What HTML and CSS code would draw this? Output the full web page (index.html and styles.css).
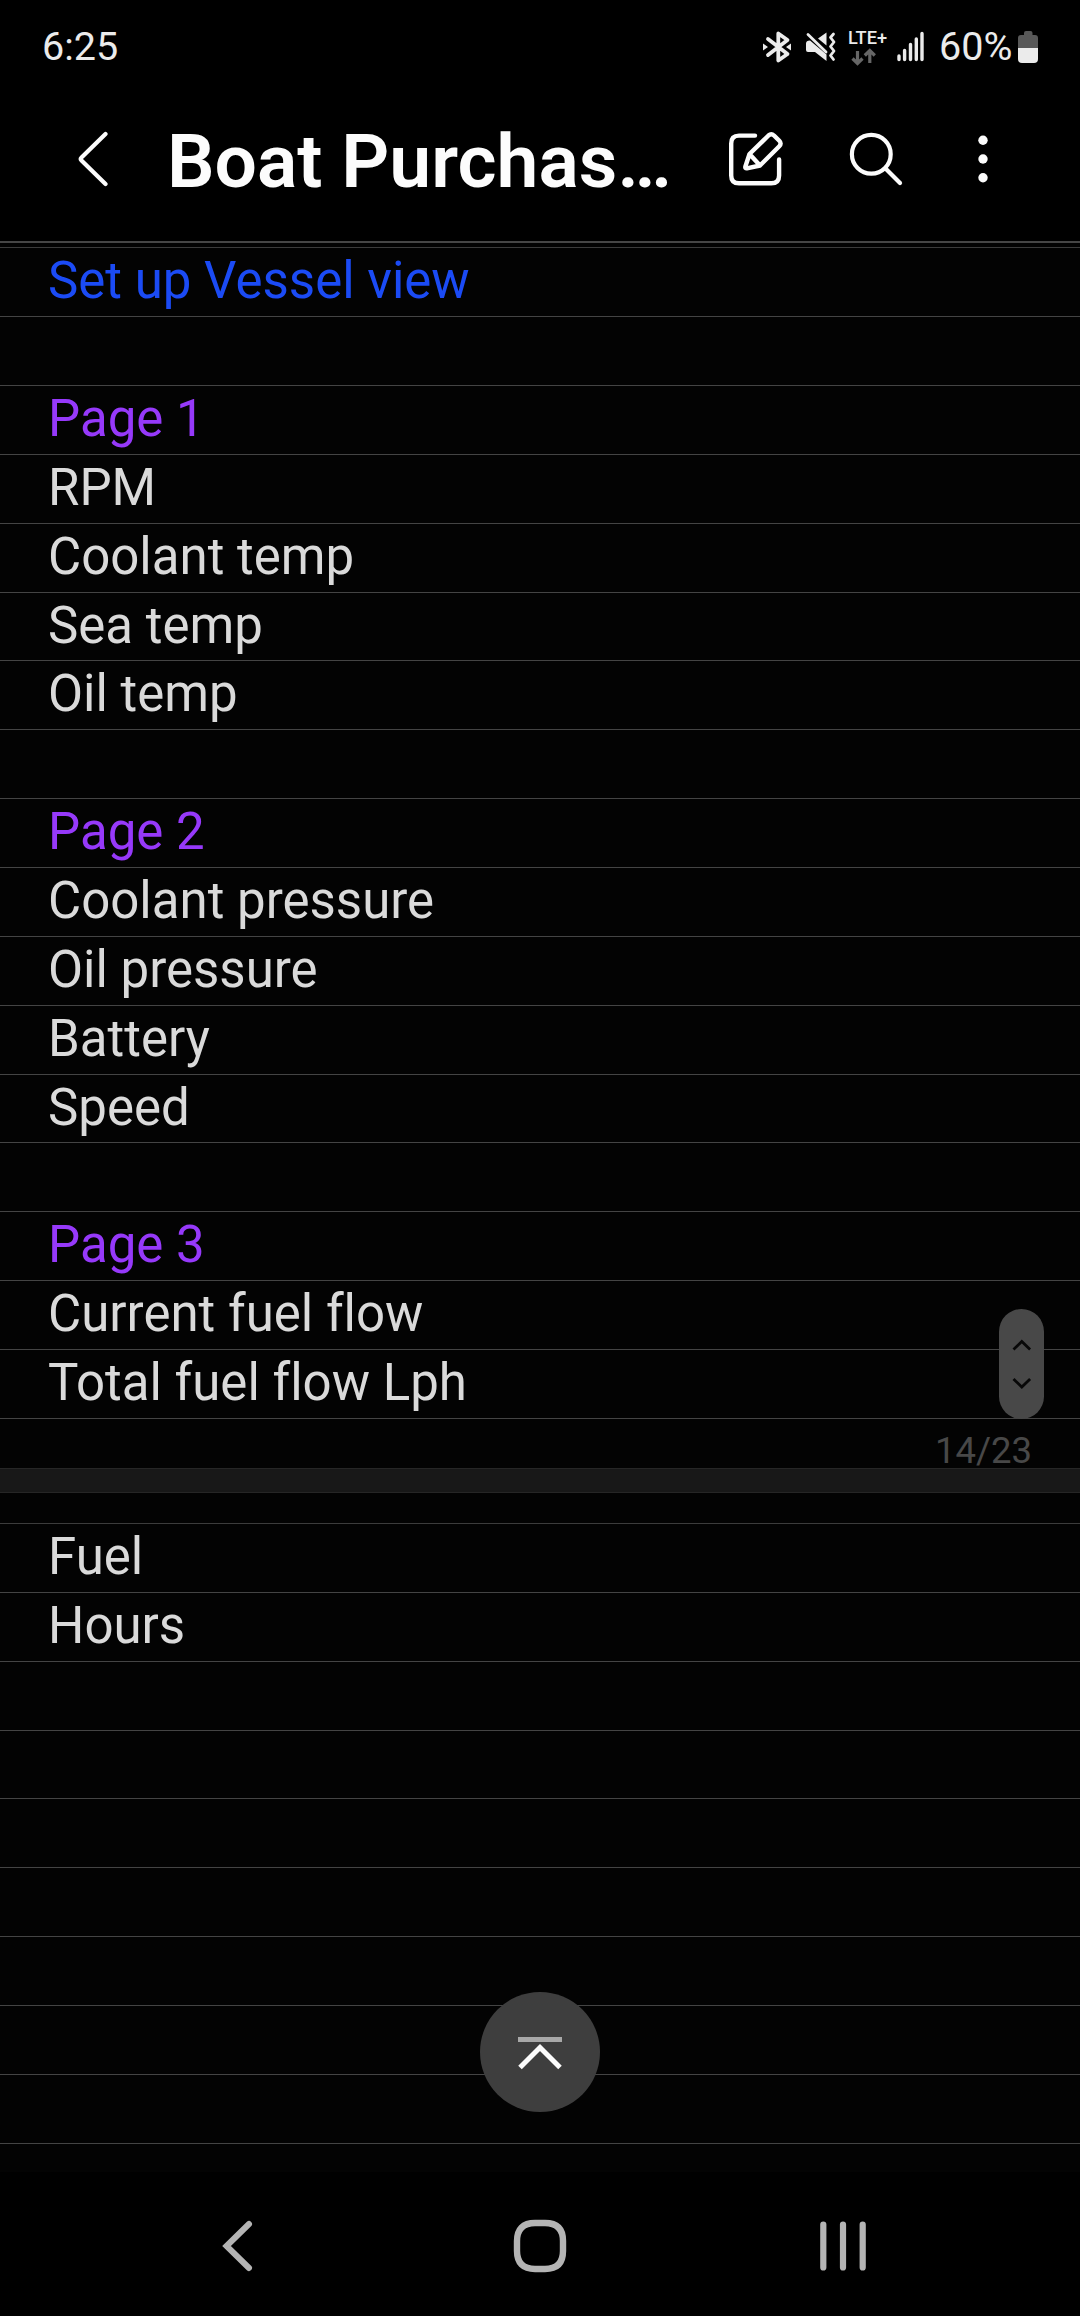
FILE: index.html
```html
<!DOCTYPE html>
<html lang="en">
<head>
    <meta charset="UTF-8">
    <meta name="viewport" content="width=device-width, initial-scale=1.0">
    <title>Boat Purchase</title>
    <link rel="stylesheet" href="styles.css">
</head>
<body>

<!-- Status bar -->
<div class="status">
    <div class="clock">6:25</div>
    <svg class="status-icons" width="166" height="50" viewBox="760 22 166 50">
        <!-- bluetooth -->
        <g fill="none" stroke="#ebebeb" stroke-width="3.8" stroke-linejoin="round" stroke-linecap="round">
            <path d="M768 39L787.500 54L778.300 60.500V33.500L787.500 40L768 55"/>
        </g>
        <path d="M763 43.500l5 3.500-5 3.500zM791 43.500l-5 3.500 5 3.500z" fill="#ebebeb"/>
        <!-- sound off, vibrate -->
        <path d="M810 40.500L826.500 54.500V61L815 52H808Q806 52 806 50V43.500Q806 40.500 810 40.500zM818 38.500L826.500 32.500V45.500z" fill="#ebebeb"/>
        <path d="M808 34.500L826 52" stroke="#ebebeb" stroke-width="2.800" stroke-linecap="round"/>
        <path d="M833.500 34l-3 3.500 3.500 4.500-3.500 4.500 3.500 4.500-3.500 4.500 3 4" fill="none" stroke="#ebebeb" stroke-width="2.800" stroke-linecap="round" stroke-linejoin="round"/>
        <!-- network -->
        <text class="lte" x="848" y="43.700" textLength="39" lengthAdjust="spacingAndGlyphs">LTE+</text>
        <path d="M857.500 51V63M852.500 58.500L857.500 63.500L862.500 58.500M869.800 63V51.500M864.800 55.500L869.800 50.500L874.800 55.500" fill="none" stroke="#666" stroke-width="3.200"/>
        <!-- signal -->
        <path d="M899 56V59.500M904.600 50.500V59.500M910.500 44.500V59.500M916.300 39V59.500M922 33.500V59.500" stroke="#ebebeb" stroke-width="3.400" stroke-linecap="round"/>
    </svg>
    <div class="percent">60%</div>
    <svg class="battery" width="20" height="32" viewBox="0 0 20 32">
        <path d="M6 2Q6 0 8 0H12.500Q14.500 0 14.500 2V4H17Q20 4 20 7V17H0V7Q0 4 3 4H6z" fill="#585858"/>
        <path d="M0 17H20V28Q20 32 16 32H4Q0 32 0 28z" fill="#ebebeb"/>
    </svg>
</div>

<!-- Title bar -->
<div class="toolbar">
    <svg class="back" width="32" height="56" viewBox="0 0 32 56" fill="none" stroke="#fcfcfc" stroke-width="4.200" stroke-linecap="round" stroke-linejoin="round">
        <path d="M29.500 3L5.500 26.500Q4 28 5.500 29.500L29.500 53"/>
    </svg>
    <h1 class="title">Boat Purchas…</h1>
    <svg class="edit" width="56" height="56" viewBox="0 0 56 56" fill="none" stroke="#fcfcfc" stroke-width="4.400" stroke-linecap="round" stroke-linejoin="round">
        <path d="M27 4.600H11Q3.200 4.600 3.200 12.400V44.400Q3.200 52.200 11 52.200H43.300Q51.100 52.200 51.100 44.400V28.500"/>
        <path d="M21.500 23L40.500 4.500Q43.300 2 46 4.500L51.300 9.800Q54 12.500 51.300 15.200L32 34.500L18.800 37.400Q17 37.600 17.300 35.800zM21.500 23L32 34.500"/>
    </svg>
    <svg class="search" width="56" height="56" viewBox="0 0 56 56" fill="none" stroke="#fcfcfc" stroke-width="4.200" stroke-linecap="round">
        <circle cx="23.300" cy="23.300" r="19.400"/>
        <path d="M37.500 37.500L52 52"/>
    </svg>
    <svg class="more" width="12" height="56" viewBox="0 0 12 56" fill="#fcfcfc">
        <circle cx="6" cy="9.300" r="4.700"/>
        <circle cx="6" cy="28" r="4.700"/>
        <circle cx="6" cy="46.700" r="4.700"/>
    </svg>
</div>

<!-- Note -->
<div class="note">
    <div class="page">
        <div class="row blue">Set up Vessel view</div>
        <div class="row"></div>
        <div class="row purple">Page 1</div>
        <div class="row">RPM</div>
        <div class="row">Coolant temp</div>
        <div class="row">Sea temp</div>
        <div class="row">Oil temp</div>
        <div class="row"></div>
        <div class="row purple">Page 2</div>
        <div class="row">Coolant pressure</div>
        <div class="row">Oil pressure</div>
        <div class="row">Battery</div>
        <div class="row">Speed</div>
        <div class="row"></div>
        <div class="row purple">Page 3</div>
        <div class="row">Current fuel flow</div>
        <div class="row">Total fuel flow Lph</div>
        <div class="page-number">14/23</div>
    </div>
    <div class="divider"></div>
    <div class="page next">
        <div class="row">Fuel</div>
        <div class="row">Hours</div>
        <div class="row"></div>
        <div class="row"></div>
        <div class="row"></div>
        <div class="row"></div>
        <div class="row"></div>
        <div class="row"></div>
        <div class="row"></div>
    </div>

    <!-- Floating controls -->
    <div class="scroller">
        <svg width="45" height="110" viewBox="0 0 45 110" fill="none" stroke="#080808" stroke-width="2.800">
            <path d="M14.500 40.500L22.800 32.500L31.100 40.500M14.500 70L22.800 78L31.100 70"/>
        </svg>
    </div>
    <div class="to-top">
        <svg width="120" height="120" viewBox="0 0 120 120" fill="none">
            <path d="M38 47.500H82" stroke="#a8a8a8" stroke-width="5"/>
            <path d="M40 75.500L60 55.500L80 75.500" stroke="#fcfcfc" stroke-width="5"/>
        </svg>
    </div>
</div>

<!-- System navigation -->
<div class="nav">
    <svg width="60" height="60" viewBox="0 0 60 60" fill="none" stroke="#b4b4b4" stroke-width="6" stroke-linecap="round">
        <path d="M42 8L19.500 30L42 52" stroke-linejoin="miter"/>
    </svg>
    <svg width="60" height="60" viewBox="0 0 60 60" fill="none" stroke="#b4b4b4" stroke-width="6.400">
        <path d="M30 7H35Q53 7 53 25V35Q53 53 35 53H25Q7 53 7 35V25Q7 7 25 7z"/>
    </svg>
    <svg width="60" height="60" viewBox="0 0 60 60" stroke="#b4b4b4" stroke-width="6.200" stroke-linecap="round">
        <path d="M10.300 8.500V51.500M30 8.500V51.500M49.700 8.500V51.500"/>
    </svg>
</div>

</body>
</html>
```

FILE: styles.css
```css
body {
    margin: 0;
    width: 1080px;
    height: 2316px;
    overflow: hidden;
    display: flex;
    flex-direction: column;
    background-color: #000;
    color: #dadada;
    font-family: Roboto, sans-serif;
}
svg {
    display: block;
    flex-shrink: 0;
}

/* Status bar */
.status {
    display: flex;
    height: 94px;
    padding: 0 42px;
    box-sizing: border-box;
    align-items: center;
    color: #ebebeb;
    font-size: 39.5px;
    line-height: 94px;
}
.clock {
    width: 718px;
}
.lte {
    font-size: 19px;
    font-weight: 500;
    fill: #ebebeb;
}
.percent {
    width: 78px;
    padding-left: 13px;
    box-sizing: border-box;
    white-space: nowrap;
}
.battery {
    margin-left: 14px;
}

/* Title bar */
.toolbar {
    display: flex;
    height: 149px;
    box-sizing: border-box;
    padding: 37px 0 0 76px;
    border-bottom: 2px solid #464646;
}
.title {
    width: 499px;
    margin: -10px 0 0 59px;
    color: #fcfcfc;
    font-size: 75px;
    font-weight: 600;
    line-height: 80px;
    white-space: nowrap;
}
.edit {
    margin-left: 62px;
}
.search {
    margin-left: 64px;
}
.more {
    margin-left: 73px;
}

/* Note */
.note {
    position: relative;
    height: 1929px;
    overflow: hidden;
    background-color: #030303;
}
.page {
    height: 1225px;
    box-sizing: border-box;
    padding-top: 4.3px;
}
.page::before {
    content: "";
    display: block;
    height: 1px;
    background-color: #3c3c3c;
}
.row {
    height: 68.87px;
    box-sizing: border-box;
    padding-left: 48px;
    border-bottom: 1px solid #444;
    font-size: 51px;
    font-variant-ligatures: none;
    line-height: 66px;
    white-space: nowrap;
}
.blue {
    color: #1b4bf5;
}
.purple {
    color: #9639fa;
}
.page-number {
    padding-right: 48px;
    color: #484848;
    font-size: 36.5px;
    line-height: 63px;
    text-align: right;
}
.divider {
    height: 25px;
    box-sizing: border-box;
    background-color: #181818;
    border-top: 1px solid #262626;
    border-bottom: 1px solid #262626;
}
.next {
    height: 679px;
    padding-top: 30px;
}

/* Floating controls */
.scroller {
    position: absolute;
    left: 999px;
    top: 1066px;
    width: 45px;
    height: 110px;
    border-radius: 23px;
    background-color: #484848;
}
.to-top {
    position: absolute;
    left: 480px;
    top: 1749px;
    width: 120px;
    height: 120px;
    border-radius: 50%;
    background-color: #3e3e3e;
}

/* System navigation */
.nav {
    display: flex;
    height: 144px;
    padding: 0 207px;
    box-sizing: border-box;
    justify-content: space-between;
    align-items: center;
    padding-top: 4px;
}
```
